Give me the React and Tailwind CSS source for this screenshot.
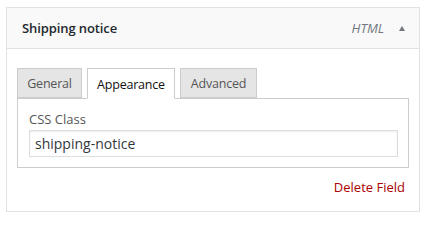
import { useState } from 'react'

const TABS = [
  { name: 'General', width: 'w-[65px]' },
  { name: 'Appearance', width: 'w-[88px]' },
  { name: 'Advanced', width: 'w-[77px]' },
]

export default function App() {
  const [tab, setTab] = useState('Appearance')
  const [cssClass, setCssClass] = useState('shipping-notice')

  return (
    <div className="w-[427px] h-[218px] bg-white pt-[7px] pl-[6px]" style={{ fontFamily: '"Open Sans", "Noto Sans", sans-serif' }}>
      <div className="w-[414px] h-[205px] border border-[#e2e2e2] bg-white flex flex-col">
        {/* Header */}
        <div className="h-[41px] shrink-0 bg-[#f9f9f9] border-b border-[#e2e2e2] flex items-center pl-[15px] pr-[14px] pt-[1px]">
          <h2 className="text-[13px] font-semibold text-[#23282d] flex-1 tracking-[-0.1px]">Shipping notice</h2>
          <span className="text-[13px] italic text-[#72777c] mr-[15px]">HTML</span>
          <span className="w-0 h-0 border-l-[3.5px] border-r-[3.5px] border-b-[5px] border-l-transparent border-r-transparent border-b-[#72777c]" />
        </div>

        {/* Body */}
        <div className="pt-[19px] pl-[10px] pr-[10px] flex flex-col">
          <div className="flex items-start gap-[5px] h-[31px] relative z-10">
            {TABS.map((t) => (
              <button
                key={t.name}
                type="button"
                onClick={() => setTab(t.name)}
                className={
                  t.name === tab
                    ? `${t.width} h-[31px] pt-[3px] border border-[#ccc] border-b-white bg-white text-[12.5px] tracking-[-0.2px] text-[#111]`
                    : `${t.width} h-[30px] pt-[3px] border border-[#ccc] bg-[#e5e5e5] text-[12.5px] tracking-[-0.2px] text-[#555]`
                }
              >
                {t.name}
              </button>
            ))}
          </div>
          <div className="-mt-px border border-[#ccc] h-[70px] pt-[11px] pl-[11px] pr-[10px]">
            <label className="block text-[13px] text-[#555] leading-[18px] mb-[2px]">CSS Class</label>
            <input
              value={cssClass}
              onChange={(e) => setCssClass(e.target.value)}
              className="w-full h-[27px] border border-[#ddd] shadow-[inset_0_1px_2px_rgba(0,0,0,0.07)] px-[5px] text-[14px] text-[#32373c] outline-none"
            />
          </div>
          <div className="flex justify-end pt-[10px] pr-[4px]">
            <button type="button" className="text-[13px] text-[#a00] hover:text-red-600">Delete Field</button>
          </div>
        </div>
      </div>
    </div>
  )
}
